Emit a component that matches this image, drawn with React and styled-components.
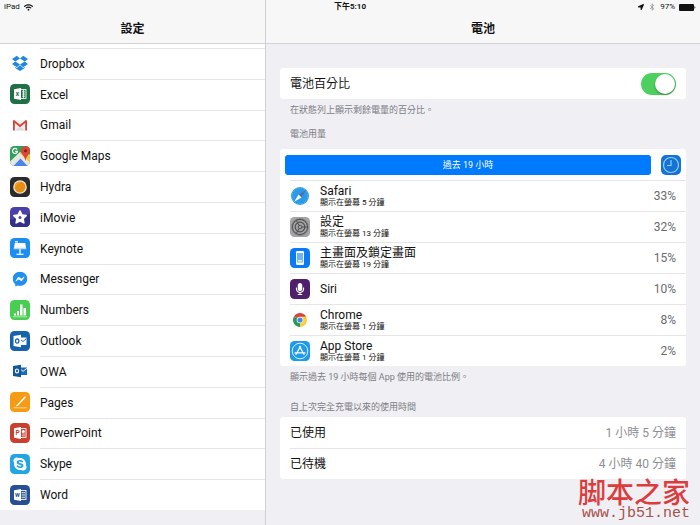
import React from "react";
import styled, { createGlobalStyle } from "styled-components";
import { FaBluetoothB, FaFacebookMessenger, FaLocationArrow, FaMicrophone, FaSkype, FaStar, FaWifi } from "react-icons/fa";

const GlobalStyle = createGlobalStyle`
  * {
    box-sizing: border-box;
  }

  body {
    margin: 0;
    font-family: Roboto, "Noto Sans CJK TC", sans-serif;
    font-size: 12px;
    line-height: 14px;
    color: #111;
    background: #efeff4;
  }
`;

function Tile (props) {
  return (
    <AppIcon viewBox="0 0 20 20" aria-hidden="true">
      {props.fill ? <rect width="20" height="20" rx="4.5" fill={props.fill}/> : null}
      {props.children}
    </AppIcon>
  )
}

// the open door and the sheet behind it that the Office icons share
function OfficeTile (props) {
  return (
    <Tile fill={props.fill}>
      <rect x="10" y="5.6" width="6" height="8.8" fill={props.fill} stroke="#fff" strokeWidth="0.9"/>
      {props.children}
      <path d="M4 5.2 11 4v12l-7-1.2z" fill="#fff"/>
      <text x="7.5" y="12.4" textAnchor="middle" fontSize="6.5" fontWeight="700" fill={props.fill}>{props.letter}</text>
    </Tile>
  )
}

const icons = {
  dropbox: (
    <Tile>
      <g fill="#1f87e0">
        <path d="M6.8 2.8 10 5.5 5.2 8.5 2 5.9z"/>
        <path d="M13.2 2.8 10 5.500l4.800 3L18 5.900z"/>
        <path d="m5.2 8.500 4.800 3-3.200 2.700L2 11.100z"/>
        <path d="m14.800 8.500-4.800 3 3.200 2.700 4.800-3.100z"/>
        <path d="m10 12.200 3.200 2.700 1.600-1v1.200L10 18l-4.800-2.900v-1.200l1.600 1z"/>
      </g>
    </Tile>
  ),
  excel: (
    <OfficeTile fill="#1f7145" letter="x">
      <path d="M12 7.8h3M12 10h3M12 12.2h3M13.5 6v8" stroke="#fff" strokeWidth="0.8"/>
    </OfficeTile>
  ),
  gmail: (
    <Tile>
      <rect x="3" y="5" width="14" height="10.5" rx="1" fill="#f1f1f1"/>
      <path d="M5 15.5 10 11l5 4.5z" fill="#dedede"/>
      <path d="M3.9 15.5V6l6.1 5 6.1-5v9.5" fill="none" stroke="#d5453b" strokeWidth="1.8" strokeLinejoin="round"/>
    </Tile>
  ),
  maps: (
    <Tile fill="#2fa259">
      <path d="M0 15.5 10 6l10 9v.5a4.5 4.5 0 0 1-4.5 4.5h-11A4.5 4.5 0 0 1 0 15.5z" fill="#e6e6e3"/>
      <path d="M3.5 20 10.5 12.5 17.5 20z" fill="#4a86e8"/>
      <path d="M10 7.5 20 16.5V9l-6-6z" fill="#f2c744"/>
      <path d="M15.3 0a4.7 4.7 0 0 0-4 6.8c1.4 2.6 3.4 3.8 4.2 8.2.8-4.4 3-6 4.2-8.4A4.7 4.7 0 0 0 15.3 0z" fill="#db4538"/>
      <circle cx="15.5" cy="4.8" r="1.5" fill="#7d2019"/>
      <path d="M7 3.4a2.5 2.5 0 1 0 .5 2H5.2" fill="none" stroke="#fff" strokeWidth="1.2"/>
    </Tile>
  ),
  hydra: (
    <Tile fill="#2b2b2d">
      <circle cx="10" cy="10" r="6.8" fill="#f4e6cf"/>
      <circle cx="10" cy="10" r="5.5" fill="#e58d14"/>
      <path d="M5.5 10A4.5 4.5 0 0 1 10 5.5" fill="none" stroke="#f8b64e" strokeWidth="0.8"/>
    </Tile>
  ),
  imovie: (
    <Tile fill="#4b3fa8">
      <path d="M0 13 20 7v8.5a4.5 4.5 0 0 1-4.5 4.5h-11A4.5 4.5 0 0 1 0 15.5z" fill="#33308a"/>
      <FaStar x="2.5" y="2.5" size="15" color="#fff"/>
      <circle cx="10" cy="10.5" r="1.5" fill="#4b4aa5"/>
    </Tile>
  ),
  keynote: (
    <Tile fill="#1e8df0">
      <path d="M4.8 5h10.4l1 6H3.8z" fill="#fff"/>
      <path d="M5 3.8h3M10 11v5" stroke="#fff" strokeWidth="1.3"/>
      <path d="M6.5 16.3h7" stroke="#fff" strokeWidth="1.2"/>
      <path d="M4 9.8h12l.2 1.4H3.8z" fill="#b9dcfb"/>
    </Tile>
  ),
  messenger: (
    <Tile>
      <FaFacebookMessenger x="2.5" y="2.5" size="15" color="#1f8ff0"/>
    </Tile>
  ),
  numbers: (
    <Tile fill="#48cf52">
      <path d="M4 13.5h2v2H4zM7 11h2v4.5H7zM10 4.5h2.5v11H10zM13.5 8H16v7.5h-2.5z" fill="#fff"/>
      <path d="M3 16.8h14" stroke="#c9f3cc" strokeWidth="0.8"/>
    </Tile>
  ),
  outlook: (
    <Tile fill="#1563ad">
      <rect x="10" y="6.5" width="6.5" height="7.5" fill="#fff"/>
      <path d="m10.5 8.5 2.5 2 3.5-3" fill="none" stroke="#1563ad" strokeWidth="0.9"/>
      <path d="M3.5 5 11 3.8v12.4L3.5 15z" fill="#fff"/>
      <ellipse cx="7.2" cy="10" rx="1.7" ry="2.2" fill="none" stroke="#1563ad" strokeWidth="1.2"/>
    </Tile>
  ),
  owa: (
    <Tile>
      <rect x="10" y="6.5" width="7" height="7.5" fill="#1c6cb5"/>
      <path d="m10.5 8.2 2.5 2.2 4-3.2" fill="none" stroke="#fff" strokeWidth="0.9"/>
      <path d="M3 5 11 3.8v12.4L3 15z" fill="#12569b"/>
      <ellipse cx="7" cy="10" rx="1.6" ry="2" fill="none" stroke="#fff" strokeWidth="1.2"/>
    </Tile>
  ),
  pages: (
    <Tile fill="#f79b14">
      <path d="M5.5 14.5 14.8 4.2l1.2 1-8 8.6z" fill="#fff"/>
      <path d="M3.5 15.8h13" stroke="#fde0b0" strokeWidth="0.9"/>
    </Tile>
  ),
  powerpoint: (
    <OfficeTile fill="#cb3f31" letter="P">
      <path d="M12 11h3M12 12.8h3" stroke="#fff" strokeWidth="0.7"/>
      <circle cx="13.3" cy="8.5" r="1.5" fill="#fff"/>
    </OfficeTile>
  ),
  skype: (
    <Tile fill="#22a5e0">
      <FaSkype x="2.5" y="2.5" size="15" color="#fff"/>
    </Tile>
  ),
  word: (
    <OfficeTile fill="#274f93" letter="w">
      <path d="M11.5 7.5H15M11.5 9.2H15M11.5 10.9H15M11.5 12.6H15" stroke="#fff" strokeWidth="0.7"/>
    </OfficeTile>
  ),
  safari: (
    <Tile>
      <circle cx="10" cy="10" r="9" fill="#2b9be8"/>
      <circle cx="10" cy="10" r="7.8" fill="none" stroke="#8bcdf5" strokeWidth="0.8" strokeDasharray="0.6 1.2"/>
      <path d="m15.8 4.2-4.4 7.2-2.8-2.8z" fill="#4d6fae"/>
      <path d="m4.2 15.8 4.4-7.2 2.8 2.8z" fill="#fff"/>
    </Tile>
  ),
  settings: (
    <Tile fill="#a3a3a5">
      <circle cx="10" cy="10" r="7.6" fill="none" stroke="#555" strokeWidth="1.1"/>
      <circle cx="10" cy="10" r="8.4" fill="none" stroke="#666" strokeWidth="0.8" strokeDasharray="0.7 0.9"/>
      <circle cx="10" cy="10" r="4.8" fill="none" stroke="#505050" strokeWidth="1.2"/>
      <circle cx="10" cy="10" r="1.8" fill="none" stroke="#4a4a4a" strokeWidth="0.9"/>
      <path d="M11.8 10H17M9.1 8.4 6.5 3.9M9.1 11.6l-2.6 4.5" stroke="#505050"/>
    </Tile>
  ),
  home: (
    <Tile fill="#0b7bf5">
      <rect x="6" y="3" width="8" height="14" rx="1.3" fill="#fff"/>
      <rect x="7" y="5" width="6" height="9.5" fill="#6db4fb"/>
      <path d="M8 12.8h4" stroke="#fff" strokeWidth="1.2"/>
    </Tile>
  ),
  siri: (
    <Tile fill="#51206c">
      <FaMicrophone x="4" y="4" size="12" color="#fff"/>
    </Tile>
  ),
  chrome: (
    <Tile>
      <path d="M10 10 3.94 6.5a7 7 0 0 1 12.12 0z" fill="#dc4437"/>
      <path d="M10 10l6.06-3.5A7 7 0 0 1 10 17z" fill="#fbce3c"/>
      <path d="M10 10v7A7 7 0 0 1 3.94 6.5z" fill="#259b57"/>
      <path d="M10 6.8h6.2L13 11.5z" fill="#fbce3c"/>
      <circle cx="10" cy="10" r="3.3" fill="#fff"/>
      <circle cx="10" cy="10" r="2.6" fill="#4787e8"/>
    </Tile>
  ),
  appstore: (
    <Tile fill="#1f9bee">
      <circle cx="10" cy="10" r="7.8" fill="none" stroke="#d8f0fd"/>
      <path d="m10.7 5-4.9 8.800M9.300 5l4.900 8.800M4.500 11.800h11" fill="none" stroke="#fff" strokeWidth="1.3"/>
    </Tile>
  ),
};

const apps = [
  { icon: "dropbox", name: "Dropbox" },
  { icon: "excel", name: "Excel" },
  { icon: "gmail", name: "Gmail" },
  { icon: "maps", name: "Google Maps" },
  { icon: "hydra", name: "Hydra" },
  { icon: "imovie", name: "iMovie" },
  { icon: "keynote", name: "Keynote" },
  { icon: "messenger", name: "Messenger" },
  { icon: "numbers", name: "Numbers" },
  { icon: "outlook", name: "Outlook" },
  { icon: "owa", name: "OWA" },
  { icon: "pages", name: "Pages" },
  { icon: "powerpoint", name: "PowerPoint" },
  { icon: "skype", name: "Skype" },
  { icon: "word", name: "Word" },
];

const usage = [
  { icon: "safari", name: "Safari", detail: "顯示在螢幕 5 分鐘", percent: "33%" },
  { icon: "settings", name: "設定", detail: "顯示在螢幕 13 分鐘", percent: "32%" },
  { icon: "home", name: "主畫面及鎖定畫面", detail: "顯示在螢幕 19 分鐘", percent: "15%" },
  { icon: "siri", name: "Siri", percent: "10%" },
  { icon: "chrome", name: "Chrome", detail: "顯示在螢幕 1 分鐘", percent: "8%" },
  { icon: "appstore", name: "App Store", detail: "顯示在螢幕 1 分鐘", percent: "2%" },
];

function StatusBar () {
  return (
    <StatusHolder>
      <StatusSide>
        iPad
        <FaWifi size="9"/>
      </StatusSide>
      <Time>下午5:10</Time>
      <StatusSide $end>
        <FaLocationArrow size="6"/>
        <FaBluetoothB size="8" color="#999"/>
        97%
        <svg width="17" height="7" viewBox="0 0 17 7" aria-hidden="true">
          <rect width="15" height="7" rx="1" fill="#111"/>
          <path d="M15.5 2.2c1.2.3 1.2 2.3 0 2.6z" fill="#111"/>
        </svg>
      </StatusSide>
    </StatusHolder>
  )
}

function Sidebar () {
  return (
    <SidebarHolder>
      <TitleBar>設定</TitleBar>
      <AppList>
        {apps.map((app) => (
          <AppLink href={"#" + app.icon} key={app.icon}>
            {icons[app.icon]}
            <AppName>{app.name}</AppName>
          </AppLink>
        ))}
      </AppList>
    </SidebarHolder>
  )
}

function UsageRow (props) {
  return (
    <UsageItem>
      {icons[props.app.icon]}
      <UsageBody>
        <UsageText>
          <span>{props.app.name}</span>
          {props.app.detail ? <UsageDetail>{props.app.detail}</UsageDetail> : null}
        </UsageText>
        <Value>{props.app.percent}</Value>
      </UsageBody>
    </UsageItem>
  )
}

function App () {
  return (
    <Screen>
      <GlobalStyle/>
      <StatusBar/>
      <Sidebar/>
      <Detail>
        <TitleBar>電池</TitleBar>
        <Content>
          <Card>
            <Row>
              <label htmlFor="percentage">電池百分比</label>
              <Switch id="percentage" type="checkbox" role="switch" defaultChecked/>
            </Row>
          </Card>
          <Note>在狀態列上顯示剩餘電量的百分比。</Note>
          <GroupTitle>電池用量</GroupTitle>
          <Card>
            <Toolbar>
              <PeriodButton type="button">過去 19 小時</PeriodButton>
              <ClockButton type="button" aria-label="時間">
                <svg width="20" height="20" viewBox="0 0 20 20" fill="none" stroke="#8fd0ff">
                  <circle cx="10" cy="10" r="7.5" strokeWidth="1.2"/>
                  <path d="M10 5v5.5H6" strokeWidth="1.2"/>
                </svg>
              </ClockButton>
            </Toolbar>
            <UsageList>
              {usage.map((app) => <UsageRow app={app} key={app.icon}/>)}
            </UsageList>
          </Card>
          <Note>顯示過去 19 小時每個 App 使用的電池比例。</Note>
          <GroupTitle $low>自上次完全充電以來的使用時間</GroupTitle>
          <Card as="dl">
            <Row>
              <dt>已使用</dt>
              <Value as="dd" $light>1 小時 5 分鐘</Value>
            </Row>
            <Row>
              <dt>已待機</dt>
              <Value as="dd" $light>4 小時 40 分鐘</Value>
            </Row>
          </Card>
        </Content>
      </Detail>
      <Watermark>
        <WatermarkName>脚本之家</WatermarkName>
        <WatermarkSite>www.jb51.net</WatermarkSite>
      </Watermark>
    </Screen>
  )
}

const Screen = styled.div`
  position: relative;
  display: flex;
  min-height: 100vh;
`;

const StatusHolder = styled.div`
  position: absolute;
  top: 0;
  left: 0;
  right: 0;
  display: grid;
  grid-template-columns: 1fr auto 1fr;
  align-items: center;
  height: 14px;
  padding: 0 4px;
  font-size: 8px;
  line-height: 12px;
`;

const StatusSide = styled.div`
  display: flex;
  align-items: center;
  gap: 4px;
  justify-content: ${(props) => props.$end ? "flex-end" : "flex-start"};
`;

const Time = styled.div`
  font-weight: 700;
`;

const SidebarHolder = styled.aside`
  display: flex;
  flex-direction: column;
  flex: 0 0 38%;
  padding-bottom: 15px;
  border-right: 1px solid #d0d0d4;
`;

const TitleBar = styled.h1`
  display: flex;
  align-items: center;
  justify-content: center;
  flex: none;
  height: 44px;
  margin: 0;
  padding-top: 14px;
  font-size: 12px;
  font-weight: 700;
  background: #f7f7f8;
  border-bottom: 1px solid #d3d3d6;
`;

const AppList = styled.nav`
  display: flex;
  flex-direction: column;
  flex: 1;
  padding-top: 4px;
  background: #fff;
`;

const AppLink = styled.a`
  display: flex;
  align-items: center;
  gap: 10px;
  flex: 1;
  padding-left: 10px;
  color: inherit;
  text-decoration: none;
`;

const AppIcon = styled.svg`
  flex: none;
  width: 20px;
  height: 20px;
`;

const AppName = styled.span`
  display: flex;
  align-items: center;
  align-self: stretch;
  flex: 1;
  border-top: 1px solid #e6e6e8;
`;

const Detail = styled.main`
  flex: 1;
`;

const Content = styled.div`
  padding: 24px 14px;
`;

const Card = styled.section`
  margin: 0;
  background: #fff;
  border-radius: 3px;
  overflow: hidden;
`;

const Row = styled.div`
  display: flex;
  align-items: center;
  justify-content: space-between;
  height: 31px;
  margin-left: 10px;
  padding-right: 10px;

  & + & {
    border-top: 1px solid #e6e6e8;
  }
`;

const Switch = styled.input`
  appearance: none;
  display: flex;
  width: 35px;
  height: 22px;
  margin: 0;
  padding: 1px;
  border-radius: 11px;
  background: #d8d8dc;

  &::before {
    content: "";
    width: 20px;
    height: 20px;
    border-radius: 50%;
    background: #fff;
    box-shadow: 0 1px 2px rgba(0, 0, 0, 0.4);
  }

  &:checked {
    justify-content: flex-end;
    background: #4cd15f;
  }
`;

const Note = styled.p`
  margin: 4px 10px 0;
  font-size: 9px;
  line-height: 14px;
  color: #7d7d82;
`;

const GroupTitle = styled.h2`
  margin: 0;
  padding: ${(props) => props.$low ? "16px 10px 3px" : "10px 10px 8px"};
  font-size: 9px;
  line-height: 14px;
  font-weight: 400;
  color: #7d7d82;
`;

const Toolbar = styled.div`
  display: flex;
  align-items: center;
  gap: 10px;
  height: 31px;
  padding: 0 5px;
`;

const PeriodButton = styled.button`
  flex: 1;
  height: 20px;
  padding: 0;
  border: 0;
  border-radius: 3px;
  font-family: inherit;
  font-size: 9px;
  color: #fff;
  background: #007aff;
`;

const ClockButton = styled.button`
  display: flex;
  width: 20px;
  height: 20px;
  padding: 0;
  border: 0;
  border-radius: 5px;
  background: #1673d6;
`;

const UsageList = styled.ul`
  margin: 0;
  padding: 0 0 0 10px;
  list-style: none;
`;

const UsageItem = styled.li`
  display: flex;
  align-items: center;
  gap: 10px;
  height: 31px;
  border-top: 1px solid #e6e6e8;
`;

const UsageBody = styled.div`
  display: flex;
  align-items: center;
  justify-content: space-between;
  flex: 1;
  padding-right: 10px;
`;

const UsageText = styled.div`
  display: flex;
  flex-direction: column;
`;

const UsageDetail = styled.span`
  font-size: 8px;
  line-height: 10px;
`;

const Value = styled.span`
  margin: 0;
  color: ${(props) => props.$light ? "#8e8e93" : "#6a6a6e"};
`;

const Watermark = styled.div`
  position: absolute;
  right: 10px;
  bottom: 4px;
  color: #dc3c3c;
  text-align: right;
`;

const WatermarkName = styled.div`
  font-family: "Noto Sans CJK SC", sans-serif;
  font-size: 28px;
  line-height: 32px;
  font-weight: 500;
`;

const WatermarkSite = styled.div`
  font-family: "Liberation Mono", monospace;
  font-size: 15px;
  line-height: 14px;
  color: #a8514a;
`;

export default App
